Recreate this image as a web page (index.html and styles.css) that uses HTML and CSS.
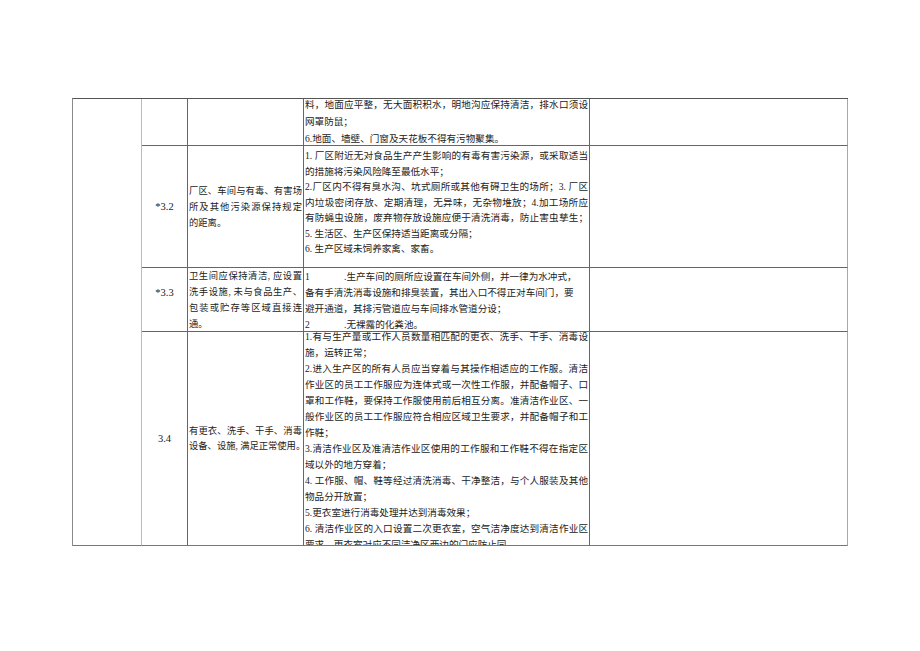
FILE: index.html
```html
<!DOCTYPE html>
<html lang="zh">
<head>
<meta charset="utf-8">
<link rel="stylesheet" href="styles.css">
</head>
<body>
<div class="sheet">
  <div class="grid">
    <div class="c1"></div>

    <div class="c2 r1"></div>
    <div class="c3 r1"></div>
    <div class="c4 r1">
      <div class="txt t17">
        <div class="ln j">料，地面应平整，无大面积积水，明地沟应保持清洁，排水口须设</div>
        <div class="ln">网罩防鼠；</div>
        <div class="ln">6.地面、墙壁、门窗及天花板不得有污物聚集。</div>
      </div>
    </div>
    <div class="c5 r1"></div>

    <div class="c2 r2 num">*3.2</div>
    <div class="c3 r2 mid">
      <div class="txt pt4">
        <div class="ln j">厂区、车间与有毒、有害场</div>
        <div class="ln j">所及其他污染源保持规定</div>
        <div class="ln">的距离。</div>
      </div>
    </div>
    <div class="c4 r2">
      <div class="txt t155">
        <div class="ln j">1. 厂区附近无对食品生产产生影响的有毒有害污染源，或采取适当</div>
        <div class="ln">的措施将污染风险降至最低水平；</div>
        <div class="ln j">2.厂区内不得有臭水沟、坑式厕所或其他有碍卫生的场所；3. 厂区</div>
        <div class="ln j">内垃圾密闭存放、定期清理，无异味，无杂物堆放；4.加工场所应</div>
        <div class="ln j">有防蝇虫设施，废弃物存放设施应便于清洗消毒，防止害虫孳生；</div>
        <div class="ln">5. 生活区、生产区保持适当距离或分隔；</div>
        <div class="ln">6. 生产区域未饲养家禽、家畜。</div>
      </div>
    </div>
    <div class="c5 r2"></div>

    <div class="c2 r3 num up">*3.3</div>
    <div class="c3 r3">
      <div class="txt pt1">
        <div class="ln j">卫生间应保持清洁, 应设置</div>
        <div class="ln j">洗手设施, 未与食品生产、</div>
        <div class="ln j">包装或贮存等区域直接连</div>
        <div class="ln">通。</div>
      </div>
    </div>
    <div class="c4 r3">
      <div class="txt pt1">
        <div class="ln"><span class="no">1</span>.生产车间的厕所应设置在车间外侧，并一律为水冲式，</div>
        <div class="ln">备有手清洗消毒设施和排臭装置，其出入口不得正对车间门，要</div>
        <div class="ln">避开通道，其排污管道应与车间排水管道分设；</div>
        <div class="ln"><span class="no">2</span>.无裸露的化粪池。</div>
      </div>
    </div>
    <div class="c5 r3"></div>

    <div class="c2 r4 num">3.4</div>
    <div class="c3 r4 mid">
      <div class="txt t15">
        <div class="ln j">有更衣、洗手、干手、消毒</div>
        <div class="ln j">设备、设施, 满足正常使用。</div>
      </div>
    </div>
    <div class="c4 r4 clip">
      <div class="txt up3">
        <div class="ln j">1.有与生产量或工作人员数量相匹配的更衣、洗手、干手、消毒设</div>
        <div class="ln">施，运转正常；</div>
        <div class="ln j">2.进入生产区的所有人员应当穿着与其操作相适应的工作服。清洁</div>
        <div class="ln j">作业区的员工工作服应为连体式或一次性工作服，并配备帽子、口</div>
        <div class="ln j">罩和工作鞋，要保持工作服使用前后相互分离。准清洁作业区、一</div>
        <div class="ln j">般作业区的员工工作服应符合相应区域卫生要求，并配备帽子和工</div>
        <div class="ln">作鞋；</div>
        <div class="ln j">3.清洁作业区及准清洁作业区使用的工作服和工作鞋不得在指定区</div>
        <div class="ln">域以外的地方穿着；</div>
        <div class="ln j">4. 工作服、帽、鞋等经过清洗消毒、干净整洁，与个人服装及其他</div>
        <div class="ln">物品分开放置；</div>
        <div class="ln">5.更衣室进行消毒处理并达到消毒效果；</div>
        <div class="ln j">6. 清洁作业区的入口设置二次更衣室，空气洁净度达到清洁作业区</div>
        <div class="ln">要求，更衣室对应不同洁净区两边的门应防止同</div>
      </div>
    </div>
    <div class="c5 r4"></div>
  </div>
</div>
</body>
</html>
```

FILE: styles.css
```css
html, body {
  margin: 0;
  padding: 0;
  background: #ffffff;
}

.sheet {
  width: 920px;
  height: 651px;
  padding: 98px 0 0 72px;
  box-sizing: border-box;
  font-family: "Liberation Serif", "Noto Sans CJK SC", serif;
  font-size: 9.6px;
  color: #222222;
}

.grid {
  display: grid;
  grid-template-columns: 69px 46px 116px 286px 258px;
  grid-template-rows: 47px 122px 64px 214px;
  border-top: 1px solid #555555;
  border-left: 1px solid #8a8a8a;
  width: max-content;
}

.grid > div {
  box-sizing: border-box;
  border-right: 1px solid #666666;
  border-bottom: 1px solid #666666;
  min-width: 0;
}

.c1 {
  grid-column: 1;
  grid-row: 1 / 5;
  border-right: 1px solid #bcbcbc !important;
  border-bottom: 1px solid #777777 !important;
}

.c2 { grid-column: 2; }
.c3 { grid-column: 3; font-size: 9.3px; }
.c4 { grid-column: 4; }
.c5 { grid-column: 5; border-right: 1px solid #a8a8a8 !important; }

.r1 { grid-row: 1; }
.r2 { grid-row: 2; }
.r3 { grid-row: 3; }
.r4 { grid-row: 4; border-bottom-color: #777777 !important; }

.num {
  display: flex;
  align-items: center;
  justify-content: center;
  font-size: 10.5px;
}

.num.up {
  padding-bottom: 14px;
}

.mid {
  display: flex;
  flex-direction: column;
  justify-content: center;
}

.clip {
  overflow: hidden;
}

.txt {
  line-height: 16px;
  padding: 0 1px 0 1px;
}

.t17 {
  line-height: 17px;
  margin-top: -3px;
}

.t155 {
  line-height: 15.5px;
  padding-top: 2px;
}

.t15 {
  line-height: 15px;
}

.pt1 { padding-top: 1px; }
.pt4 { padding-top: 4px; }
.up3 { margin-top: -3px; }

.c3 .txt {
  padding: 0 1px 0 1px;
}

.ln {
  white-space: nowrap;
  text-align: left;
}

.ln.j {
  text-align: justify;
  text-align-last: justify;
}

.no {
  display: inline-block;
  width: 39px;
}
```
